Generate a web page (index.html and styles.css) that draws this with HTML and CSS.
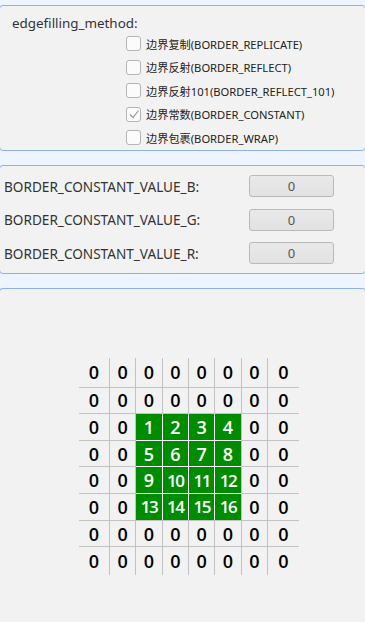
FILE: index.html
```html
<!DOCTYPE html>
<html>
<head>
<meta charset="utf-8">
<link rel="stylesheet" href="styles.css">
</head>
<body>
<div class="panel p1">
  <div class="title">edgefilling_method:</div>
  <div class="options">
    <div class="opt"><span class="box"></span><span class="lbl">边界复制(BORDER_REPLICATE)</span></div>
    <div class="opt"><span class="box"></span><span class="lbl">边界反射(BORDER_REFLECT)</span></div>
    <div class="opt"><span class="box"></span><span class="lbl">边界反射101(BORDER_REFLECT_101)</span></div>
    <div class="opt"><span class="box checked"><svg width="12" height="12" viewBox="0 0 12 12"><polyline points="2,6.5 5,9.5 10.5,2.5" fill="none" stroke="#9a9a9a" stroke-width="1.2"/></svg></span><span class="lbl">边界常数(BORDER_CONSTANT)</span></div>
    <div class="opt"><span class="box"></span><span class="lbl">边界包裹(BORDER_WRAP)</span></div>
  </div>
</div>
<div class="panel p2">
  <div class="vrow"><span class="vlbl">BORDER_CONSTANT_VALUE_B:</span><span class="vbox">0</span></div>
  <div class="vrow"><span class="vlbl">BORDER_CONSTANT_VALUE_G:</span><span class="vbox">0</span></div>
  <div class="vrow"><span class="vlbl">BORDER_CONSTANT_VALUE_R:</span><span class="vbox">0</span></div>
</div>
<div class="panel p3">
  <div class="grid">
    <div class="c">0</div><div class="c">0</div><div class="c">0</div><div class="c">0</div><div class="c">0</div><div class="c">0</div><div class="c">0</div><div class="c">0</div>
    <div class="c">0</div><div class="c">0</div><div class="c">0</div><div class="c">0</div><div class="c">0</div><div class="c">0</div><div class="c">0</div><div class="c">0</div>
    <div class="c">0</div><div class="c">0</div>
    <div class="green">
      <div class="g">1</div><div class="g">2</div><div class="g">3</div><div class="g">4</div>
      <div class="g">5</div><div class="g">6</div><div class="g">7</div><div class="g">8</div>
      <div class="g">9</div><div class="g two">10</div><div class="g two">11</div><div class="g two">12</div>
      <div class="g two">13</div><div class="g two">14</div><div class="g two">15</div><div class="g two">16</div>
    </div>
    <div class="c">0</div><div class="c">0</div>
    <div class="c">0</div><div class="c">0</div><div class="c">0</div><div class="c">0</div>
    <div class="c">0</div><div class="c">0</div><div class="c">0</div><div class="c">0</div>
    <div class="c">0</div><div class="c">0</div><div class="c">0</div><div class="c">0</div>
    <div class="c">0</div><div class="c">0</div><div class="c">0</div><div class="c">0</div><div class="c">0</div><div class="c">0</div><div class="c">0</div><div class="c">0</div>
    <div class="c">0</div><div class="c">0</div><div class="c">0</div><div class="c">0</div><div class="c">0</div><div class="c">0</div><div class="c">0</div><div class="c">0</div>
  </div>
</div>
</body>
</html>
```
FILE: styles.css
```css
html, body {
  margin: 0;
  padding: 0;
}
body {
  background: #eff5fe;
  font-family: "Noto Sans", "Noto Sans CJK SC", sans-serif;
  color: #333;
  overflow: hidden;
  height: 622px;
}
.panel {
  box-sizing: border-box;
  margin: 0 -1px;
  background: #f2f2f2;
  border: 1px solid #8fb1ea;
  border-radius: 4px;
}
.p1 {
  margin-top: 5px;
  height: 146px;
  padding-top: 8px;
}
.title {
  padding-left: 12px;
  font-size: 13.4px;
  line-height: 18px;
  height: 18px;
}
.options {
  padding-left: 126px;
}
.opt {
  display: flex;
  align-items: center;
  height: 23.5px;
  gap: 5px;
}
.box {
  box-sizing: border-box;
  width: 15px;
  height: 15px;
  border: 1px solid #b4b4b4;
  border-radius: 3px;
  background: #fbfbfb;
  display: flex;
  align-items: center;
  justify-content: center;
  flex: none;
}
.lbl {
  font-size: 11.2px;
  color: #222;
  white-space: nowrap;
}
.p2 {
  margin-top: 14px;
  height: 109px;
  padding: 9px 0 0 4px;
  display: flex;
  flex-direction: column;
  gap: 11.5px;
}
.vrow {
  display: grid;
  grid-template-columns: 245px 85px;
  align-items: center;
  height: 22px;
}
.vlbl {
  font-size: 13.6px;
  color: #333;
  white-space: nowrap;
}
.vbox {
  box-sizing: border-box;
  height: 22px;
  border: 1px solid #b9b9b9;
  border-radius: 3px;
  background: linear-gradient(#e9e9e9, #e2e2e2);
  text-align: center;
  font-size: 13px;
  line-height: 20px;
  color: #555;
}
.p3 {
  margin-top: 14px;
  height: 340px;
  border-bottom: none;
  border-radius: 4px 4px 0 0;
  padding-top: 69px;
  padding-left: 79px;
}
.grid {
  display: grid;
  grid-template-columns: 30px repeat(6, 25.33px) 31px;
  grid-template-rows: 28.5px repeat(6, 25.67px) 28px;
  gap: 1px;
  background: #c2c2c2;
  width: max-content;
}
.c {
  background: #f2f2f2;
  display: flex;
  align-items: center;
  justify-content: center;
  font-family: "Open Sans", sans-serif;
  font-weight: 600;
  font-size: 18px;
  color: #000;
}
.green {
  grid-column: 3 / 7;
  grid-row: 3 / 7;
  display: grid;
  grid-template-columns: repeat(4, 1fr);
  grid-template-rows: repeat(4, 1fr);
  gap: 1px;
  background: #ffffff;
}
.g {
  background: #008c00;
  color: #fff;
  display: flex;
  align-items: center;
  justify-content: center;
  font-family: "Open Sans", sans-serif;
  font-weight: 600;
  font-size: 18px;
}
.g.two {
  letter-spacing: -1.5px;
  font-size: 17px;
}
```
